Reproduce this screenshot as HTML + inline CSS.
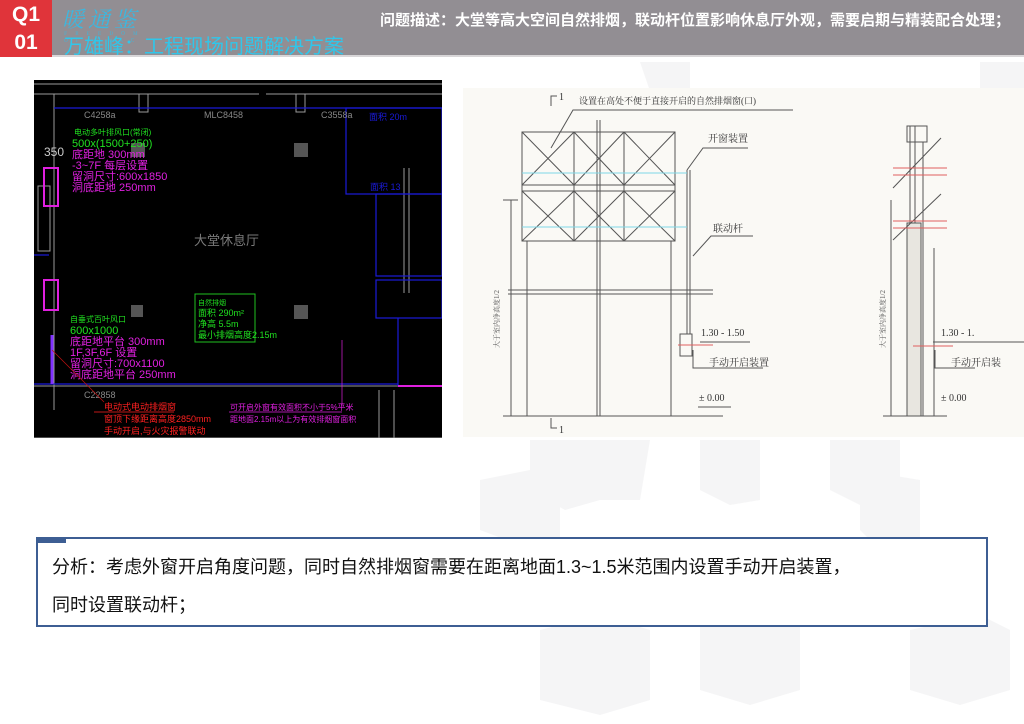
<!DOCTYPE html>
<html><head><meta charset="utf-8">
<style>
*{margin:0;padding:0;box-sizing:border-box}
body{width:1024px;height:724px;position:relative;background:#fff;overflow:hidden;font-family:"Liberation Sans","Noto Sans CJK SC",sans-serif}
.hdr{position:absolute;left:0;top:0;width:1024px;height:57px;background:#928e93;border-bottom:2px solid #d8d6d8}
.red{position:absolute;left:0;top:0;width:52px;height:57px;background:#e0343a;color:#fff;font-weight:bold;font-size:21px;text-align:center;line-height:28px;padding-top:1px}
.logo{position:absolute;left:62px;top:3px;color:#3bb8e0;font-family:"Noto Serif CJK SC",serif;font-size:22px;letter-spacing:4px;font-style:italic}
.logo small{position:absolute;left:2px;top:27px;font-size:5px;font-style:normal;letter-spacing:8px}
.sub{position:absolute;left:64px;top:36px;color:#30c6ea;font-size:20px;line-height:22px}
.desc{position:absolute;right:14px;top:9px;color:#fff;font-weight:bold;font-size:15px}
.box{position:absolute;left:36px;top:537px;width:952px;height:90px;border:2px solid #3d5e93;background:#fff;padding:9px 0 0 14px;font-size:18px;line-height:38px;color:#111}
.box:before{content:"";position:absolute;left:-2px;top:-2px;width:30px;height:6px;background:#3d5e93}
</style></head><body>
<svg style="position:absolute;left:0;top:0" width="1024" height="724">
<g fill="#f5f5f6">
<polygon points="640,62 690,62 690,120 660,120"/>
<polygon points="980,62 1024,62 1024,120 980,110"/>
<polygon points="530,440 600,440 600,500 565,510 530,490"/>
<polygon points="600,440 650,440 640,500 600,500"/>
<polygon points="700,440 760,440 760,500 730,505 700,490"/>
<polygon points="830,440 900,440 900,490 860,505 830,490"/>
<polygon points="480,480 530,470 560,490 560,540 520,545 480,530"/>
<polygon points="860,470 920,480 920,540 880,550 860,530"/>
<polygon points="540,630 600,615 650,630 650,700 600,715 540,700"/>
<polygon points="700,620 770,605 800,620 800,690 750,705 700,690"/>
<polygon points="910,630 980,615 1010,630 1010,690 960,705 910,690"/>
</g>
</svg>
<div class="hdr"></div>
<div class="red">Q1<br>01</div>
<div class="logo">暖通鉴<small>FREEDOM OF HVAC</small></div>
<div class="sub">万雄峰：工程现场问题解决方案</div>
<div class="desc">问题描述：大堂等高大空间自然排烟，联动杆位置影响休息厅外观，需要启期与精装配合处理；</div>

<svg style="position:absolute;left:34px;top:80px" width="408" height="358" viewBox="0 0 408 358" font-family="Liberation Sans,Noto Sans CJK SC,sans-serif">
<rect width="408" height="358" fill="#000"/>
<g stroke="#9a9a9a" fill="none" stroke-width="1">
<line x1="0" y1="14" x2="225" y2="14"/><line x1="232" y1="14" x2="408" y2="14"/>
<line x1="0" y1="4" x2="408" y2="4"/>
<line x1="20" y1="14" x2="20" y2="330"/>
<rect x="105" y="14" width="9" height="18"/><rect x="262" y="14" width="9" height="18"/>
<line x1="370" y1="88" x2="370" y2="213"/><line x1="375" y1="88" x2="375" y2="213"/>
<line x1="0" y1="306" x2="408" y2="306"/><line x1="0" y1="358" x2="408" y2="358"/>
<line x1="345" y1="310" x2="345" y2="358"/><line x1="360" y1="310" x2="360" y2="358"/>
<rect x="4" y="106" width="12" height="65"/>
</g>
<g stroke="#1a1ad8" fill="none" stroke-width="1.2">
<line x1="20" y1="28" x2="408" y2="28"/>
<rect x="312" y="28" width="96" height="86"/>
<rect x="342" y="114" width="66" height="82"/>
<rect x="342" y="200" width="66" height="38"/>
<line x1="364" y1="238" x2="364" y2="306"/>
<line x1="0" y1="304" x2="364" y2="304"/>
<line x1="0" y1="175" x2="15" y2="175"/>
</g>
<line x1="18" y1="255" x2="18" y2="304" stroke="#8030ff" stroke-width="3"/>
<line x1="364" y1="306" x2="408" y2="306" stroke="#e020e0" stroke-width="2"/>
<g fill="#555"><rect x="97" y="63" width="14" height="14"/><rect x="260" y="63" width="14" height="14"/><rect x="97" y="225" width="12" height="12"/><rect x="260" y="225" width="14" height="14"/></g>
<g fill="#888" font-size="9"><text x="50" y="38">C4258a</text><text x="170" y="38">MLC8458</text><text x="287" y="38">C3558a</text><text x="50" y="318">C22858</text></g>
<text x="160" y="165" fill="#7a7a7a" font-size="13">大堂休息厅</text>
<rect x="10" y="88" width="14" height="38" fill="none" stroke="#e020e0" stroke-width="2"/>
<rect x="10" y="200" width="14" height="30" fill="none" stroke="#e020e0" stroke-width="2"/>
<g font-size="11">
<text x="40" y="55" fill="#20e020" font-size="8">电动多叶排风口(常闭)</text>
<text x="38" y="67" fill="#20e020">500x(1500+250)</text>
<text x="38" y="78" fill="#e020e0">底距地 300mm</text>
<text x="38" y="89" fill="#e020e0">-3~7F 每层设置</text>
<text x="38" y="100" fill="#e020e0">留洞尺寸:600x1850</text>
<text x="38" y="111" fill="#e020e0">洞底距地 250mm</text>
<text x="36" y="242" fill="#20e020" font-size="8">自垂式百叶风口</text>
<text x="36" y="254" fill="#20e020">600x1000</text>
<text x="36" y="265" fill="#e020e0">底距地平台 300mm</text>
<text x="36" y="276" fill="#e020e0">1F,3F,6F 设置</text>
<text x="36" y="287" fill="#e020e0">留洞尺寸:700x1100</text>
<text x="36" y="298" fill="#e020e0">洞底距地平台 250mm</text>
<text x="10" y="76" fill="#ccc" font-size="12">350</text>
</g>
<rect x="161" y="214" width="60" height="48" fill="none" stroke="#20c020"/>
<g font-size="9" fill="#20e020"><text x="164" y="225" font-size="7">自然排烟</text><text x="164" y="236">面积 290m²</text><text x="164" y="247">净高 5.5m</text><text x="164" y="258">最小排烟高度2.15m</text></g>
<g font-size="9" fill="#ff2020"><text x="70" y="330">电动式电动排烟窗</text><text x="70" y="342">窗顶下缘距离高度2850mm</text><text x="70" y="354">手动开启,与火灾报警联动</text></g>
<line x1="60" y1="332" x2="140" y2="332" stroke="#ff2020" stroke-width=".7"/>
<line x1="18" y1="270" x2="70" y2="322" stroke="#c01010" stroke-width=".7"/>
<g font-size="8" fill="#e020e0"><text x="196" y="330">可开启外窗有效面积不小于5%平米</text><text x="196" y="342">距地面2.15m以上为有效排烟窗面积</text></g>
<line x1="195" y1="332" x2="308" y2="332" stroke="#e020e0" stroke-width=".7"/>
<line x1="308" y1="260" x2="308" y2="326" stroke="#e020e0" stroke-width=".7"/>
<text x="335" y="40" fill="#1a1ad8" font-size="9">面积 20m</text>
<text x="336" y="110" fill="#1a1ad8" font-size="9">面积 13</text>
</svg>

<svg style="position:absolute;left:463px;top:88px" width="561" height="349" viewBox="0 0 561 349" font-family="Liberation Serif,Noto Serif CJK SC,serif">
<rect width="561" height="349" fill="#faf9f5"/>
<g stroke="#555" fill="none" stroke-width="1">
<path d="M88 18V8h6"/><path d="M88 330v10h6"/>
<rect x="59" y="44" width="153" height="109"/>
<line x1="59" y1="97" x2="212" y2="97"/><line x1="59" y1="103" x2="212" y2="103"/>
<line x1="111" y1="44" x2="111" y2="153"/><line x1="161" y1="44" x2="161" y2="153"/>
<path d="M59 44L111 97M111 44L59 97M59 103L111 153M111 103L59 153M111 44L161 97M161 44L111 97M111 103L161 153M161 103L111 153M161 44L212 97M212 44L161 97M161 103L212 153M212 103L161 153"/>
<line x1="134" y1="32" x2="134" y2="328"/><line x1="137" y1="32" x2="137" y2="328"/>
<line x1="64" y1="153" x2="64" y2="328"/><line x1="208" y1="153" x2="208" y2="328"/>
<line x1="48" y1="112" x2="48" y2="328"/><line x1="40" y1="112" x2="55" y2="112"/><line x1="40" y1="328" x2="55" y2="328"/>
<line x1="45" y1="202" x2="250" y2="202"/><line x1="45" y1="206" x2="250" y2="206"/>
<line x1="40" y1="328" x2="260" y2="328"/>
<line x1="224" y1="82" x2="224" y2="246"/><line x1="227" y1="82" x2="227" y2="246"/>
<rect x="217" y="246" width="12" height="22"/>
<path d="M230 168L248 148H290"/><path d="M224 82L240 60H285"/>
<path d="M230 262V280h70"/><line x1="237" y1="254" x2="287" y2="254"/>
<line x1="235" y1="319" x2="268" y2="319"/>
<path d="M88 60L110 22H330"/>
<line x1="447" y1="38" x2="447" y2="328"/><line x1="452" y1="38" x2="452" y2="328"/>
<rect x="444" y="38" width="20" height="16"/>
<rect x="444" y="135" width="14" height="193" fill="#e8e6e0"/>
<line x1="460" y1="54" x2="460" y2="328"/>
<line x1="471" y1="160" x2="471" y2="328"/>
<path d="M430 100L478 50M430 152L478 106"/>
<line x1="428" y1="112" x2="428" y2="328"/><line x1="420" y1="328" x2="484" y2="328"/>
<path d="M472 262V280h40"/><line x1="470" y1="254" x2="561" y2="254"/>
</g>
<g stroke="#7fd8e8" stroke-width="1"><line x1="59" y1="85" x2="224" y2="85"/><line x1="59" y1="139" x2="224" y2="139"/></g>
<g stroke="#e06060" stroke-width="1"><line x1="215" y1="257" x2="250" y2="257"/><line x1="430" y1="80" x2="484" y2="80"/><line x1="430" y1="87" x2="484" y2="87"/><line x1="430" y1="133" x2="484" y2="133"/><line x1="430" y1="140" x2="484" y2="140"/><line x1="450" y1="258" x2="490" y2="258"/></g>
<g font-size="10" fill="#333">
<text x="96" y="12">1</text><text x="96" y="345">1</text>
<text x="116" y="16" font-size="9">设置在高处不便于直接开启的自然排烟窗(口)</text>
<text x="245" y="54">开窗装置</text>
<text x="250" y="144">联动杆</text>
<text x="238" y="248">1.30 - 1.50</text>
<text x="246" y="278">手动开启装置</text>
<text x="236" y="313">± 0.00</text>
<text x="478" y="248">1.30 - 1.</text>
<text x="488" y="278">手动开启装</text>
<text x="478" y="313">± 0.00</text>
</g>
<text x="0" y="0" font-size="7" fill="#555" transform="translate(36,260) rotate(-90)">大于室内净高度1/2</text>
<text x="0" y="0" font-size="7" fill="#555" transform="translate(422,260) rotate(-90)">大于室内净高度1/2</text>
</svg>

<div class="box">分析：考虑外窗开启角度问题，同时自然排烟窗需要在距离地面1.3~1.5米范围内设置手动开启装置，<br>同时设置联动杆；</div>
</body></html>
